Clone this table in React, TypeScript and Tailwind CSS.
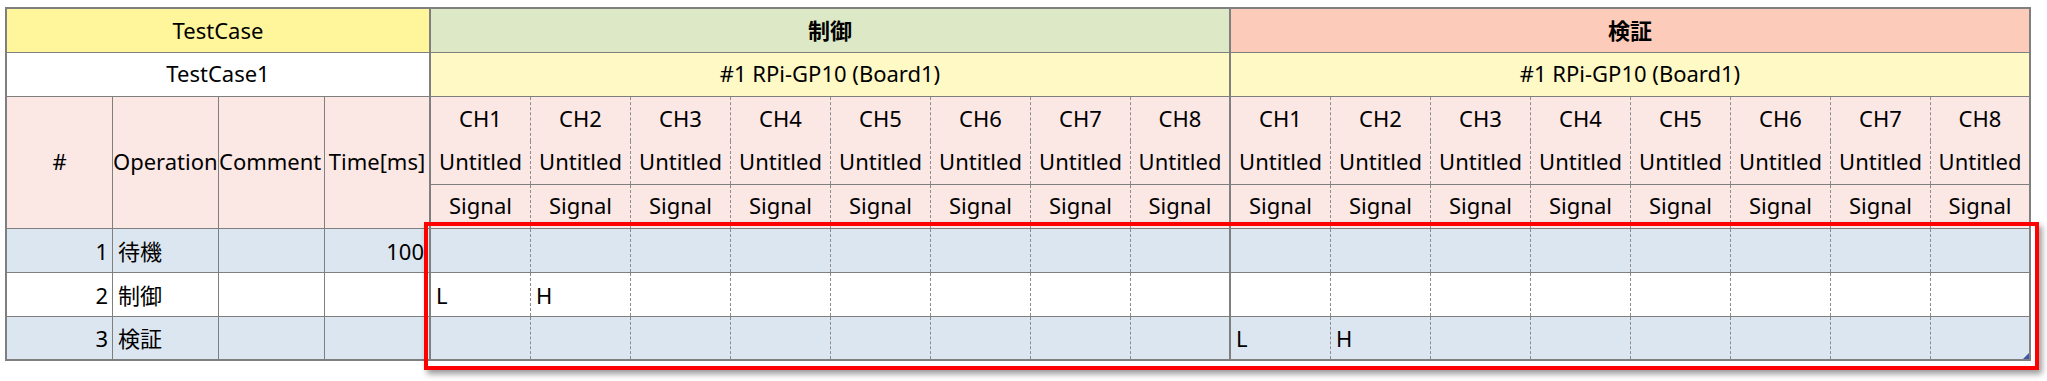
import clsx from 'clsx'
import { ReactNode } from 'react'

const channels = ['CH1', 'CH2', 'CH3', 'CH4', 'CH5', 'CH6', 'CH7', 'CH8']

const groups = [
  { title: '制御', bg: 'bg-[#dde9c6]' },
  { title: '検証', bg: 'bg-[#fdcbb9]' }
]

const rows = [
  { no: 1, op: '待機', time: '100', bg: 'bg-[#dce6f0]', values: [[], []] },
  { no: 2, op: '制御', time: '', bg: 'bg-white', values: [['L', 'H'], []] },
  { no: 3, op: '検証', time: '', bg: 'bg-[#dce6f0]', values: [[], ['L', 'H']] }
]

type ChCellProps = {
  children?: ReactNode
  last: boolean
  bottom?: boolean
  bg: string
}

// header channel cell: solid bottom line on the cell, dashed divider on the inner box
function ChCell({ children, last, bottom = true, bg }: ChCellProps) {
  return (
    <div
      className={clsx(
        'flex border-[#7f7f7f]',
        bg,
        bottom && 'border-b',
        last && 'border-r-2'
      )}
    >
      <div
        className={clsx(
          'flex flex-1 items-center justify-center pb-[3px]',
          !last && 'border-r border-dashed border-[#8c8c8c]'
        )}
      >
        {children}
      </div>
    </div>
  )
}

function App() {
  return (
    <div className="min-h-screen bg-white pt-[7px] pl-[5px] font-['Noto_Sans','Noto_Sans_CJK_JP',sans-serif] text-[22px] text-black">
      <div className="relative w-max">
        <div className="grid grid-cols-[106px_106px_106px_106px_repeat(16,100px)] grid-rows-[repeat(8,44px)] border-t-2 border-l-2 border-[#7f7f7f] leading-none">
          {/* top title row */}
          <div className="col-span-4 flex items-center justify-center border-r-2 border-b border-[#7f7f7f] bg-[#fff59b] pb-[2px]">
            TestCase
          </div>
          {groups.map((g) => (
            <div
              key={g.title}
              className={clsx(
                'col-span-8 flex items-center justify-center border-r-2 border-b border-[#7f7f7f] pb-[2px] font-bold',
                g.bg
              )}
            >
              {g.title}
            </div>
          ))}

          {/* board row */}
          <div className="col-span-4 flex items-center justify-center border-r-2 border-b border-[#7f7f7f] bg-white pb-[3px]">
            TestCase1
          </div>
          {groups.map((g) => (
            <div
              key={g.title}
              className="col-span-8 flex items-center justify-center border-r-2 border-b border-[#7f7f7f] bg-[#fff9c5] pb-[3px]"
            >
              #1 RPi-GP10 (Board1)
            </div>
          ))}

          {/* column headers */}
          <div className="row-span-3 flex items-center justify-center border-r border-b border-[#7f7f7f] bg-[#fbe8e5] pb-[3px]">
            #
          </div>
          <div className="row-span-3 flex items-center border-r border-b border-[#7f7f7f] bg-[#fbe8e5] pb-[3px]">
            Operation
          </div>
          <div className="row-span-3 flex items-center border-r border-b border-[#7f7f7f] bg-[#fbe8e5] pb-[3px]">
            Comment
          </div>
          <div className="row-span-3 flex items-center justify-center border-r-2 border-b border-[#7f7f7f] bg-[#fbe8e5] pb-[3px]">
            Time[ms]
          </div>
          {groups.map((g) =>
            channels.map((ch, i) => (
              <ChCell key={g.title + ch} last={i === 7} bottom={false} bg="bg-[#fbe8e5]">
                {ch}
              </ChCell>
            ))
          )}
          {groups.map((g) =>
            channels.map((ch, i) => (
              <ChCell key={g.title + ch} last={i === 7} bg="bg-[#fbe8e5]">
                Untitled
              </ChCell>
            ))
          )}
          {groups.map((g) =>
            channels.map((ch, i) => (
              <ChCell key={g.title + ch} last={i === 7} bg="bg-[#fbe8e5]">
                Signal
              </ChCell>
            ))
          )}

          {/* data rows */}
          {rows.map((r, ri) => {
            const lastRow = ri === rows.length - 1
            const bb = lastRow ? 'border-b-2' : 'border-b'
            return [
              <div
                key={`no${r.no}`}
                className={clsx('flex items-center justify-end border-r border-[#7f7f7f] pr-[4px]', bb, r.bg)}
              >
                {r.no}
              </div>,
              <div
                key={`op${r.no}`}
                className={clsx('flex items-center border-r border-[#7f7f7f] pl-[5px]', bb, r.bg)}
              >
                {r.op}
              </div>,
              <div
                key={`cm${r.no}`}
                className={clsx('border-r border-[#7f7f7f]', bb, r.bg)}
              />,
              <div
                key={`tm${r.no}`}
                className={clsx('flex items-center justify-end border-r-2 border-[#7f7f7f] pr-[5px]', bb, r.bg)}
              >
                {r.time}
              </div>,
              ...groups.map((g, gi) =>
                channels.map((ch, i) => (
                  <div
                    key={`${r.no}${g.title}${ch}`}
                    className={clsx(
                      'relative flex border-[#7f7f7f]',
                      bb,
                      r.bg,
                      i === 7 && 'border-r-2'
                    )}
                  >
                    <div
                      className={clsx(
                        'flex flex-1 items-center pl-[5px]',
                        i !== 7 && 'border-r border-dashed border-[#8c8c8c]'
                      )}
                    >
                      {r.values[gi][i] ?? ''}
                    </div>
                    {lastRow && gi === 1 && i === 7 && (
                      <svg
                        className="absolute right-0 bottom-0"
                        width="6"
                        height="6"
                        viewBox="0 0 6 6"
                      >
                        <path d="M6 0 L6 6 L0 6 Z" fill="#3f55a8" />
                      </svg>
                    )}
                  </div>
                ))
              )
            ]
          })}
        </div>

        {/* selection highlight drawn over the signal area */}
        <div className="pointer-events-none absolute top-[215px] left-[419px] h-[148px] w-[1615px] border-4 border-[#ff0000] shadow-[3px_4px_6px_rgba(0,0,0,0.4)]" />
      </div>
    </div>
  )
}

export default App
